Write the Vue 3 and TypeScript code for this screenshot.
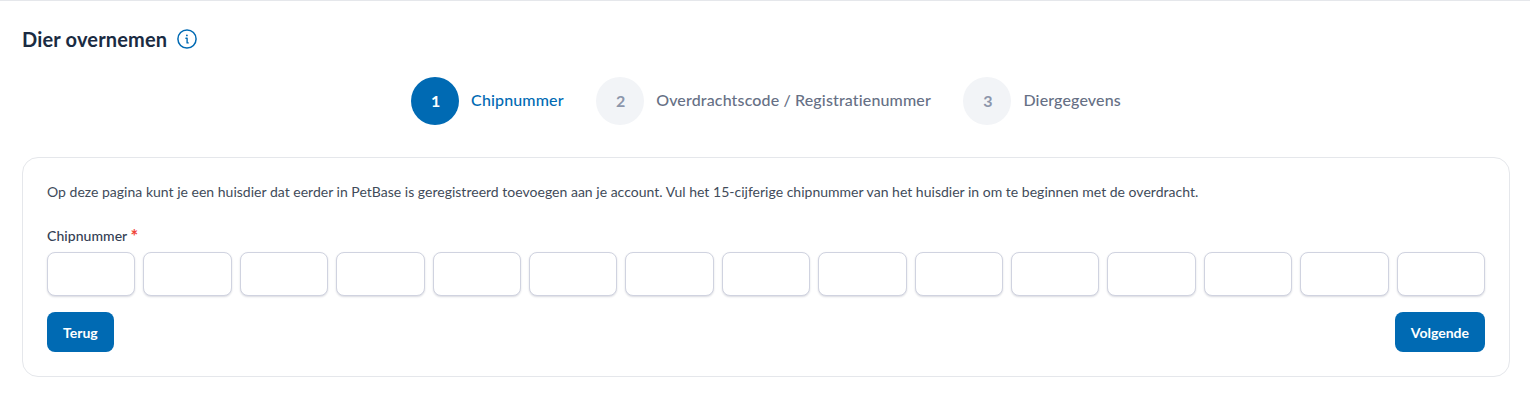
<script setup lang="ts">
const steps = [
  { n: 1, label: 'Chipnummer', active: true },
  { n: 2, label: 'Overdrachtscode / Registratienummer', active: false },
  { n: 3, label: 'Diergegevens', active: false },
]
const cells: number[] = Array.from({ length: 15 }, (_, i) => i)
</script>

<template>
  <main class="page">
    <header class="head">
      <h1 class="title">Dier overnemen</h1>
      <svg class="info" width="20" height="20" viewBox="0 0 20 20" fill="none" stroke="#006ab3" stroke-linecap="round" stroke-linejoin="round">
        <circle cx="10" cy="10" r="9.1" stroke-width="1.5" />
        <path d="M8.9 9.2H10.1V13.9H11.2" stroke-width="1.4" />
        <circle cx="9.9" cy="6.4" r="0.9" fill="#006ab3" stroke="none" />
      </svg>
    </header>

    <ol class="steps">
      <li v-for="s in steps" :key="s.n" class="step" :class="{ active: s.active }">
        <span class="dot">{{ s.n }}</span>
        <span class="label">{{ s.label }}</span>
      </li>
    </ol>

    <section class="card">
      <p class="intro">Op deze pagina kunt je een huisdier dat eerder in PetBase is geregistreerd toevoegen aan je account. Vul het 15-cijferige chipnummer van het huisdier in om te beginnen met de overdracht.</p>
      <label class="field-label">Chipnummer <span class="req">*</span></label>
      <div class="cells">
        <input v-for="c in cells" :key="c" class="cell" type="text" maxlength="1" />
      </div>
      <div class="actions">
        <button class="btn" type="button">Terug</button>
        <button class="btn" type="button">Volgende</button>
      </div>
    </section>
  </main>
</template>

<style>
body { background: #fff; }
</style>

<style scoped>
.page {
  box-sizing: border-box;
  width: 1530px;
  height: 403px;
  border-top: 1px solid #e5e7eb;
  padding: 0 20px 0 22px;
  font-family: Lato, "Open Sans", sans-serif;
  color: #374151;
  overflow: hidden;
}
.head {
  display: flex;
  align-items: center;
  gap: 10px;
  height: 20px;
  margin-top: 28px;
}
.title {
  margin: 0;
  font-size: 20px;
  font-weight: 700;
  letter-spacing: 0.17px;
  color: #1a2b42;
}
.steps {
  list-style: none;
  margin: 28px 0 0;
  padding: 0;
  display: flex;
  justify-content: center;
  gap: 32.5px;
}
.step {
  display: flex;
  align-items: center;
  gap: 12px;
  height: 48px;
}
.dot {
  box-sizing: border-box;
  width: 48px;
  height: 48px;
  padding: 0 0 2px 1px;
  border-radius: 50%;
  background: #f2f4f7;
  color: #8c96ab;
  display: flex;
  align-items: center;
  justify-content: center;
  font-size: 16px;
  font-weight: 700;
}
.label {
  font-size: 16px;
  line-height: 20px;
  margin-bottom: 2px;
  font-weight: 500;
  letter-spacing: 0.14px;
  color: #667085;
}
.active .dot { background: #006ab3; color: #fff; }
.active .label { color: #006ab3; }
.card {
  box-sizing: border-box;
  height: 220px;
  margin-top: 32px;
  border: 1px solid #e5e7eb;
  border-radius: 16px;
  padding: 24px;
  display: flex;
  flex-direction: column;
}
.intro {
  margin: 0;
  height: 20px;
  font-size: 14px;
  line-height: 20px;
  letter-spacing: 0.012px;
  color: #414b5a;
}
.field-label {
  margin-top: 24px;
  height: 20px;
  font-size: 14px;
  line-height: 20px;
  font-weight: 500;
  letter-spacing: 0.05px;
  color: #344054;
}
.req { color: #f04438; font-size: 18px; line-height: 0; font-weight: 700; vertical-align: -2px; }
.cells {
  margin-top: 6px;
  display: grid;
  grid-template-columns: repeat(15, 1fr);
  gap: 8px;
}
.cell {
  box-sizing: border-box;
  min-width: 0;
  width: 100%;
  height: 44px;
  border: 1px solid #d0d3e0;
  border-radius: 8px;
  background: #fff;
  box-shadow: 0 1px 2px rgba(16, 24, 60, 0.16);
}
.actions {
  margin-top: 16px;
  display: flex;
  justify-content: space-between;
}
.btn {
  height: 40px;
  padding: 0 16px;
  border: 0;
  border-radius: 8px;
  background: #006ab3;
  color: #fff;
  font-family: inherit;
  font-size: 14px;
  font-weight: 700;
}
</style>
